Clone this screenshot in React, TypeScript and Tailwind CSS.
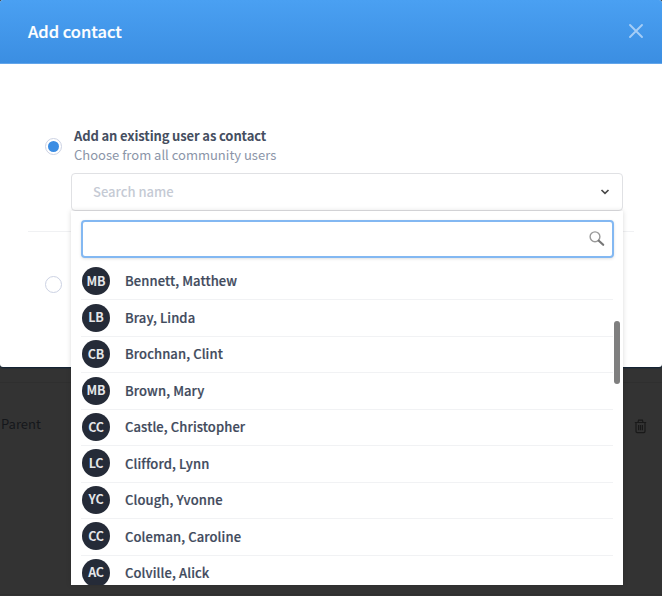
import { useState } from "react";

type User = {
    initials: string
    name: string
}

const users: User[] = [
    { initials: 'MB', name: 'Bennett, Matthew' },
    { initials: 'LB', name: 'Bray, Linda' },
    { initials: 'CB', name: 'Brochnan, Clint' },
    { initials: 'MB', name: 'Brown, Mary' },
    { initials: 'CC', name: 'Castle, Christopher' },
    { initials: 'LC', name: 'Clifford, Lynn' },
    { initials: 'YC', name: 'Clough, Yvonne' },
    { initials: 'CC', name: 'Coleman, Caroline' },
    { initials: 'AC', name: 'Colville, Alick' },
]

const Radio = ({ checked, onSelect }: { checked: boolean, onSelect: () => void }) => (
    <button
        type="button"
        role="radio"
        aria-checked={checked}
        onClick={onSelect}
        className="flex size-[17px] shrink-0 items-center justify-center rounded-full border border-[#ccd2e3] bg-white"
    >
        {checked && <span className="size-[11px] rounded-full bg-[#3b8de3]" />}
    </button>
)

const UserRow = ({ user }: { user: User }) => (
    <li className="mr-px flex h-[36.45px] shrink-0 items-center border-b border-[#f1f2f4] pb-px">
        <span className="ml-px flex size-7 shrink-0 items-center justify-center rounded-full bg-[#252b38] text-[12.5px] font-bold tracking-[-0.2px] text-[#e4e5e8]">
            {user.initials}
        </span>
        <span className="ml-[15px] text-[13px] font-medium tracking-[0.1px] text-[#414a5c] [-webkit-text-stroke:0.2px_#414a5c]">{user.name}</span>
    </li>
)

const UserMenu = () => {
    const [query, setQuery] = useState('')
    const found = users.filter(user => user.name.toLowerCase().includes(query.toLowerCase()))

    return (
        <div className="absolute top-full left-0 flex h-[374px] w-[552px] flex-col bg-white pt-[9px] pr-[9px] pl-[10px] shadow-[0_0_5px_rgba(0,0,0,0.15)]">
            <div className="flex h-[38px] w-[533px] shrink-0 items-center rounded-[4px] border-2 border-[#83b8f2] bg-white pr-[7px] shadow-[0_1px_3px_rgba(0,0,0,0.12)]">
                <input
                    value={query}
                    onChange={event => setQuery(event.target.value)}
                    className="h-full min-w-0 flex-1 px-3 text-[13px] outline-none"
                    type="text"
                />
                <svg width="16" height="16" viewBox="0 0 16 16" fill="none">
                    <circle cx="6" cy="5.8" r="4.9" stroke="#999" strokeWidth="1.4" />
                    <path d="M9.8 9.7L14.2 13.8" stroke="#777" strokeWidth="2.2" strokeLinecap="round" />
                </svg>
            </div>
            <ul className="mt-[6px] flex min-h-0 flex-1 flex-col overflow-hidden">
                {found.map(user => <UserRow key={user.name} user={user} />)}
            </ul>
            <div className="absolute top-[110px] right-[3px] h-[63px] w-[6px] rounded-full bg-[#7f7f7f]" />
        </div>
    )
}

export default function App() {
    const [mode, setMode] = useState('existing')

    return (
        <div className="h-[596px] w-[662px] overflow-hidden bg-[#333] font-['Noto_Sans_CJK_SC','Noto_Sans',sans-serif]">
            <div className="flex h-[367px] flex-col rounded-[3px] bg-white shadow-[0_1px_2px_#0b2036]">
                <header className="flex h-16 shrink-0 items-center justify-between rounded-t-[3px] border-b border-[#62a5ea] bg-linear-to-b from-[#4aa0f2] to-[#3b8ee2] pr-[18px] pb-px pl-7">
                    <h1 className="text-[16.5px] font-medium text-white [-webkit-text-stroke:0.2px_#fff]">Add contact</h1>
                    <button type="button">
                        <svg width="16" height="16" viewBox="0 0 16 16" stroke="#a5cdf6" strokeWidth="1.9" strokeLinecap="round">
                            <path d="M2 2L14 14M14 2L2 14" />
                        </svg>
                    </button>
                </header>
                <section className="mx-7 mt-[63px] flex h-[105px] border-b border-[#f0f1f3]">
                    <div className="mt-[11px] ml-[17px]">
                        <Radio checked={mode === 'existing'} onSelect={() => setMode('existing')} />
                    </div>
                    <div className="-mt-px ml-[9px] flex flex-col">
                        <p className="ml-[3px] h-[19px] text-[13px] leading-[19px] font-bold tracking-[-0.13px] text-[#454e60]">Add an existing user as contact</p>
                        <p className="ml-[3px] h-[19px] text-[13px] leading-[19px] text-[#8b95a8]">Choose from all community users</p>
                        <div className="relative z-10 mt-[9px] h-[38px] w-[552px]">
                            <div className="flex h-full items-center justify-between rounded-[4px] border-[1.5px] border-[#e0e1e4] bg-white pr-3 pl-[21px]">
                                <span className="text-[13px] font-medium text-[#c5cad4]">Search name</span>
                                <svg width="10" height="8" viewBox="0 0 10 8" fill="none" stroke="#484848" strokeWidth="1.7">
                                    <path d="M1.5 2L5 5.3L8.5 2" />
                                </svg>
                            </div>
                            <UserMenu />
                        </div>
                    </div>
                </section>
                <div className="mt-11 ml-[45px]">
                    <Radio checked={mode === 'new'} onSelect={() => setMode('new')} />
                </div>
            </div>
            <div className="mt-[15px] flex h-[213px] items-start justify-between border-y border-[#2f2f2f] pt-8 pr-[15px]">
                <span className="-mt-px ml-px text-[13px] leading-5 text-[#15171b]">Parent</span>
                <svg className="mt-1" width="13" height="15" viewBox="0 0 13 15" fill="none" stroke="#191919" strokeWidth="1.2">
                    <path d="M0.8 3.5H12.2M4 3.3L4.6 1.2H8.4L9 3.3M2 3.7V12.3Q2 13.6 3.2 13.6H9.8Q11 13.6 11 12.3V3.7M4.6 6V11.3M6.5 6V11.3M8.4 6V11.3" />
                </svg>
            </div>
        </div>
    )
}
